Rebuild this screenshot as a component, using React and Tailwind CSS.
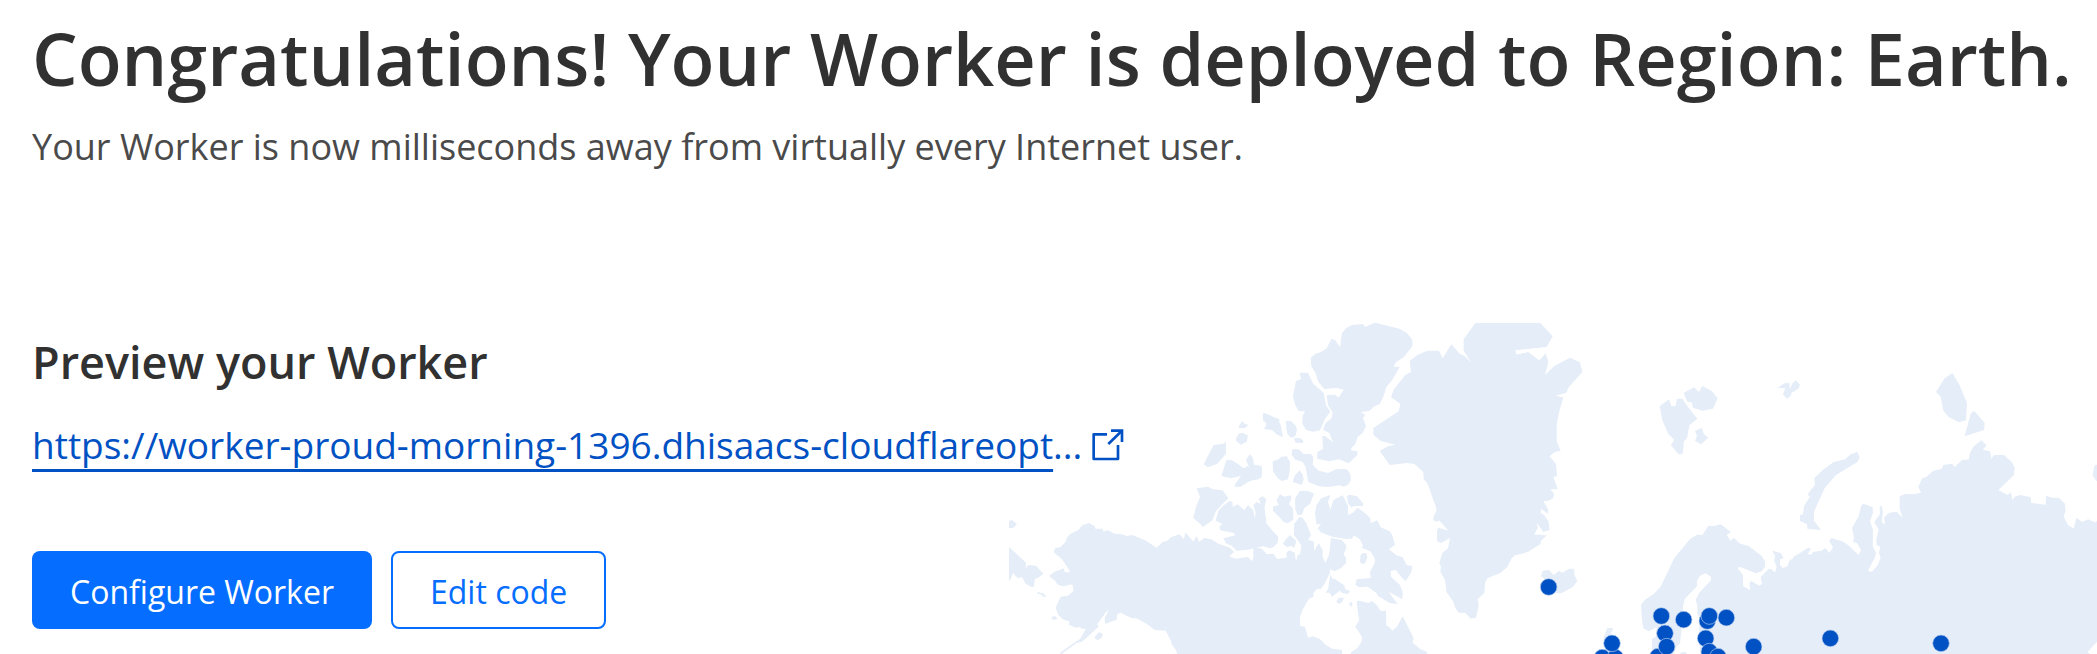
import React from "react";

// Land outlines, one group per map sheet. Each sheet has its own origin.
const sheets = [
  {
    transform: "translate(0 0)",
    paths: [
      "M27 632L37 631L51 643L39 654H27Z",
      "M27 711L78 758L77 777L84 765L108 767L130 791L117 802L104 808L102 830L95 831L77 821L66 801L54 805L39 789L33 805L27 813Z",
      "M112 846L129 850L139 859L131 861L122 853L112 851Z",
      "M153 923L164 917L173 926L160 930Z",
      "M147 798L162 786L192 775L194 787H210L206 777L186 748L161 727L166 714L181 712L198 694L200 685L210 672L235 660L247 646L266 639L284 648L286 656L307 656L311 665L322 660L344 671L365 673L381 678L396 675L434 690L470 713L488 696L502 692L513 682L538 673L552 688L556 667L580 695L590 678L597 696L613 684L634 688L655 701L690 713L702 726L688 739L706 746L744 741L755 753L766 738L761 731L767 716L786 716L801 733L820 731L832 748L860 746V1034H532L528 1020L516 1004L512 991L497 962L464 960L440 941L408 925H396L362 908L351 913L350 929L315 942L314 924L327 901L318 906L291 944L297 949L263 980L246 995L230 999L182 1034L180 1028L213 1005L240 987L258 957L243 955L239 951L227 953L207 944L208 934L192 930L175 915L167 893L182 860L204 857L221 842L217 823L203 826L191 829L173 824L165 812Z",
      "M285 979L298 966L309 973L305 983L293 990L285 986Z",
      "M717 348L727 333L734 341L745 345L735 354H717Z",
      "M708 386L716 371L728 368L744 377L740 395L723 404L709 394Z",
      "M611 463L622 441L641 405L672 401L678 394V431L652 461L624 472Z",
      "M664 498L679 451L694 450L713 461L731 475L744 468L750 478L738 450L749 433L759 443L762 464L785 468V488L777 508L752 512L744 516L722 530H703L707 520L723 498L709 501L692 505L675 500Z",
      "M590 535L624 530L638 538L668 541L685 565L667 582L648 603L637 631L614 647L608 652L602 643L580 624L588 590L600 561Z",
      "M690 572L698 578V590L713 583L733 601L744 585L760 601L764 625L767 608L760 586L769 576L787 584L793 588L799 640L826 672L835 687L832 699L821 711L809 715L790 709L744 719L710 722L695 707L678 700L670 685L706 676L701 669L661 661L658 650L667 642L647 632L655 602L671 586Z",
      "M775 567L788 559L799 568L793 588L785 577Z",
      "M790 308L838 328V368L820 360L795 353L800 341L790 330Z",
      "M820 453L840 447V506L836 508L820 485Z",
      "M840 557L830 572L836 585L820 590L824 604L840 614Z",
    ],
  },
  {
    transform: "translate(780 0)",
    paths: [
      "M9 308L30 316L55 333L62 346L69 381L52 374L36 360L12 357L21 343L9 330Z",
      "M0 468L6 476L5 500L0 507Z",
      "M0 562L18 567L14 591L8 587L0 578Z",
      "M10 590L16 617L19 648L34 663L55 679L52 692H40V712L0 702V590Z",
      "M78 333H93L108 348L111 360L106 378L93 384L82 371L79 355Z",
      "M101 385L118 383L129 391V399L107 398Z",
      "M38 454L50 453L64 440L80 439L90 456L89 484L84 508L65 513L56 506V485H39Z",
      "M119 481L128 494L131 509L125 525L98 516L104 497Z",
      "M97 418L116 418L131 432H152L160 441L158 464L176 482L205 489L228 478L253 476L263 480L271 492L273 510L264 524L251 530L238 526L206 531L177 529L145 516L137 472L128 455L106 449L95 434Z",
      "M60 553L73 560L93 556L94 568L87 582L99 596L100 629L83 640L71 636L60 623L39 602L40 589H61L50 570Z",
      "M120 542L144 543L162 551L150 582L134 593L125 615L112 614L106 597L105 566Z",
      "M119 188L144 188L160 222L191 249L198 286L211 305L196 325L180 361L158 365L138 360L127 340L128 318L135 304L116 303L106 286L99 258L108 213L123 208Z",
      "M152 143L167 131L181 127L199 116L215 86L226 91L240 112L246 69L260 53L276 45L310 42L315 51L345 38L418 56L441 69L457 89V109L431 142L408 157L400 170L419 171L396 211L379 231L371 258L360 281L341 290L329 302L302 307L316 314L309 324L318 349L308 369L293 380L286 403L273 415L275 422L292 423V435L266 460L237 448L208 454L172 446V427L189 416L187 378L195 378L219 397L208 369L189 359L197 338L214 326L218 307L204 286L200 255L226 254L236 263L251 239L230 234L193 237L175 215L166 188L154 169Z",
      "M211 555L204 577L211 599L220 571L248 556L264 587V615L281 607L292 593L316 610L331 625L332 639L352 631L362 652L389 664L397 676L405 704L387 718L409 736L427 741L441 766L457 768L454 786L437 814L423 800L407 779L392 783L393 800L420 825L428 846L427 868L386 845L413 883L388 878L354 858L350 850L323 830L297 832L286 824L290 808L332 804L330 786L345 757L343 742L331 724L305 713L309 706L299 688L282 676L276 686L257 687L217 680L182 667L173 655L183 643H169L165 609L169 587L183 565Z",
      "M261 559L266 554L290 558L308 578L310 588H284L274 592L264 579Z",
      "M119 620L128 624L139 640L153 675L145 689L162 695V724L176 700L188 719V740L196 758L207 735L213 684L245 690L258 704L259 715L251 733L258 745V760L242 775L223 784L210 777L211 785L194 821L182 837H170L161 848L160 861L147 866L129 896L120 921V947L135 951L144 983L158 979L179 987L197 1004L217 1016L246 1020V1034H-20V714L0 714L23 737L33 735L51 747L80 743V727L89 721L104 728L108 755L113 735L120 733L124 708L117 695L102 675V643Z",
      "M90 675L103 688L109 693L103 713L93 707L82 712L68 701L78 688Z",
      "M302 734L308 730L319 729L322 742L316 758L307 763L300 757Z",
      "M211 793L218 808L224 806L254 827L255 838L270 843L264 852L248 850L240 842L215 861L210 848L197 848L205 834Z",
      "M229 876L236 863H252L247 875L237 881Z",
      "M267 883L272 875L278 880L275 891Z",
      "M290 874L297 872L326 879L335 873L350 885L361 902H378L379 947L387 950L397 962L411 950L428 919L461 985L458 998L481 1018L498 1024L505 1034H273V1027L292 1015L305 994L306 980L286 950L298 930L294 908Z",
      "M646 39H842V112L766 121L769 134L804 127L842 154V638L831 638L832 652L822 674H842V702L806 724L765 735L755 745L742 771L721 789L683 804L675 818L673 849L653 867L656 887L648 923L632 926L616 908H596L587 896L579 874L560 847L555 810L541 786L543 770L538 759L547 729L564 715L570 684L543 699L531 693V660L536 653L565 662L539 632L527 635L519 627L530 598L502 519L491 508L490 486L463 462L440 459L389 465L359 423L384 409L406 404L362 393L340 374V354L416 304L421 282L393 261L402 238L435 196L453 185L449 153L472 135L502 122H537L548 145L574 103L600 132L613 137L634 159L611 122V88Z",
    ],
  },
  {
    transform: "translate(1560 0)",
    paths: [
      "M-20 39H61L98 79L80 111L0 118L-20 120Z",
      "M-20 137L0 132L26 127L57 152L77 130L85 156L75 195L103 168L150 143L180 157L187 186L146 232L139 248L107 257L130 262L118 304L110 342V393L122 422L104 426L89 439L108 462L111 498L100 501L113 537L91 538L103 553L99 565L86 572L70 573L84 598V611L64 597L57 606L72 615L85 634L89 660L70 666L50 637L53 655L42 674L81 676L25 725L0 733L-20 736Z",
      "M63 799L68 783L86 779L101 795L117 783L128 788L147 776H163V794L172 813L158 831L124 850L108 849L90 820Z",
      "M419 289L447 268L454 288H467L471 266H487L501 287L532 326L508 346L501 385L492 394L488 432L475 433L453 405L463 389L445 372L427 331Z",
      "M491 248L522 232L537 246L547 228L575 243L593 265L579 296L548 302L519 293L515 277L502 275Z",
      "M525 363L546 353L551 372L565 383L543 403L525 392L531 378Z",
      "M773 233L793 220L808 219L810 238L816 222L827 211L840 224L835 236L814 249L812 257L801 267L789 253L796 235Z",
      "M486 945L480 1000L470 1010L460 1034H396V986L408 980L410 952L386 964L370 955L366 930L363 884L374 870L402 851L423 828L463 744L510 687L531 674L547 675L565 648H582L602 643L633 667L620 674L631 692L642 684L661 701L686 708L725 738L735 754V770L725 784L707 790L660 770L653 775L669 795V828L691 841L688 819L694 813L718 827L726 822L722 801L746 777L754 778L765 787L770 771L762 751L766 740L758 722L783 730L791 745L780 748V766L789 774L803 768L808 752L866 714L873 716L862 733L875 735L880 726L902 724V1034H540L537 920L532 912V887L527 870L537 849L573 811V800L557 790L540 797L531 813V829L494 867L489 890Z",
      "M262 954H280L272 972L290 990V1034H260L250 985Z",
      "M478 1034L482 1028L495 1025L503 1034Z",
    ],
  },
  {
    transform: "translate(2400 0)",
    paths: [
      "M0 729L24 713L31 716L22 732L33 735L39 726L62 724L76 714L88 729L99 712L88 694L93 684L126 694L144 705L176 735L183 720L171 699L159 696L162 682L156 654L176 619L183 588L190 581L218 592L219 608L210 634L219 659L218 708L228 728L224 744L204 782L215 786L231 769L242 744L237 729L241 710L230 706L229 689L236 660L223 636L240 612L239 589L245 588L249 606L245 637L255 644L252 622L268 608L290 605L308 624L299 596V559L316 552L340 553L363 548L355 530L367 504L378 502L400 482L425 477L430 465L456 461L464 471L487 449H506L510 428L520 410L544 391L560 406L548 419L570 424L574 446L582 435H612L636 457L644 473L642 495L595 540L623 555L633 547L637 571L643 561L659 555L692 561L694 579L737 584L738 557L757 563H776L794 580L797 602L791 619L803 644L821 656L829 623L847 636L864 628L884 637L900 630V985L862 1027L874 1034H-20V740Z",
      "M152 433L172 426L179 442L173 455L107 496L74 534L42 605V632L63 660L22 656L21 643L0 633V616L9 612L12 589L30 559L22 554L45 524L43 504L72 477L101 456L135 448Z",
      "M408 246L434 205L457 189L478 224L501 279L498 331L477 337L447 322L430 302L422 260Z",
      "M512 311L521 304L528 308L554 339L552 360L494 379Z",
      "M900 460L883 467L878 496L888 512L900 516Z",
    ],
  },
];

const locations = [
  [1646, 831], [1984, 918], [2051, 929], [2122, 933], [2128, 918], [2179, 923],
  [1995, 970], [1807, 1043], [1846, 1043], [1836, 1000], [1974, 1040], [2000, 1010],
  [2117, 985], [2128, 1025], [2154, 1040], [2261, 1010], [2491, 985], [2823, 1000],
];

function WorldMap() {
  return (
    <svg
      role="img"
      aria-label="Map of network locations"
      viewBox="27 39 3264 993"
      className="col-start-1 row-start-1 h-[331px] w-[1088px] justify-self-end"
    >
      <g className="fill-[#e5edf8]">
        {sheets.map((sheet) => (
          <g key={sheet.transform} transform={sheet.transform}>
            {sheet.paths.map((d) => (
              <path key={d} d={d} />
            ))}
          </g>
        ))}
      </g>
      <g className="fill-[#0051c3] stroke-[#b9cfee]" strokeWidth="2">
        {locations.map(([x, y]) => (
          <circle key={`${x}-${y}`} cx={x} cy={y} r="25" />
        ))}
      </g>
    </svg>
  );
}

function ExternalIcon() {
  return (
    <svg viewBox="0 0 96 96" aria-hidden="true" className="size-8 shrink-0 fill-none stroke-current" strokeWidth="8">
      <path d="M45 16H5V90H78V48" strokeLinejoin="round" />
      <path d="M57 5H90V39" />
      <path d="M49 45L89 6" />
    </svg>
  );
}

export default function App() {
  return (
    <main className="overflow-hidden bg-white pl-8 font-['Open_Sans','Noto_Sans',sans-serif] text-[#313131]">
      <header className="pt-1">
        <h1 className="whitespace-nowrap text-[72px] leading-[108px] font-semibold">
          Congratulations! Your Worker is deployed to Region: Earth.
        </h1>
        <p className="text-[36px] leading-[70px] text-[#4a4a4a]">
          Your Worker is now milliseconds away from virtually every Internet user.
        </p>
      </header>
      <section className="mt-[141px] grid">
        <WorldMap />
        <div className="relative col-start-1 row-start-1 pt-1">
          <h2 className="text-[45px] leading-[70px] font-semibold">Preview your Worker</h2>
          <div className="mt-3.5 flex items-center gap-2.5 whitespace-nowrap text-[37px] leading-[68px] text-[#0051c3]">
            <a href="https://worker-proud-morning-1396.dhisaacs-cloudflareopt">
              <span className="underline decoration-3 underline-offset-10 [text-decoration-skip-ink:none]">
                https://worker-proud-morning-1396.dhisaacs-cloudflareopt
              </span>
              ...
            </a>
            <ExternalIcon />
          </div>
          <div className="mt-[72px] flex gap-[19px] text-[32px] leading-[48px]">
            <button type="button" className="rounded-lg bg-[#056dff] px-[38px] pt-[17px] pb-[13px] text-white">
              Configure Worker
            </button>
            <button type="button" className="rounded-lg border-2 border-[#056dff] bg-white px-[37px] pt-[15px] pb-[11px] text-[#056dff]">
              Edit code
            </button>
          </div>
        </div>
      </section>
    </main>
  );
}
